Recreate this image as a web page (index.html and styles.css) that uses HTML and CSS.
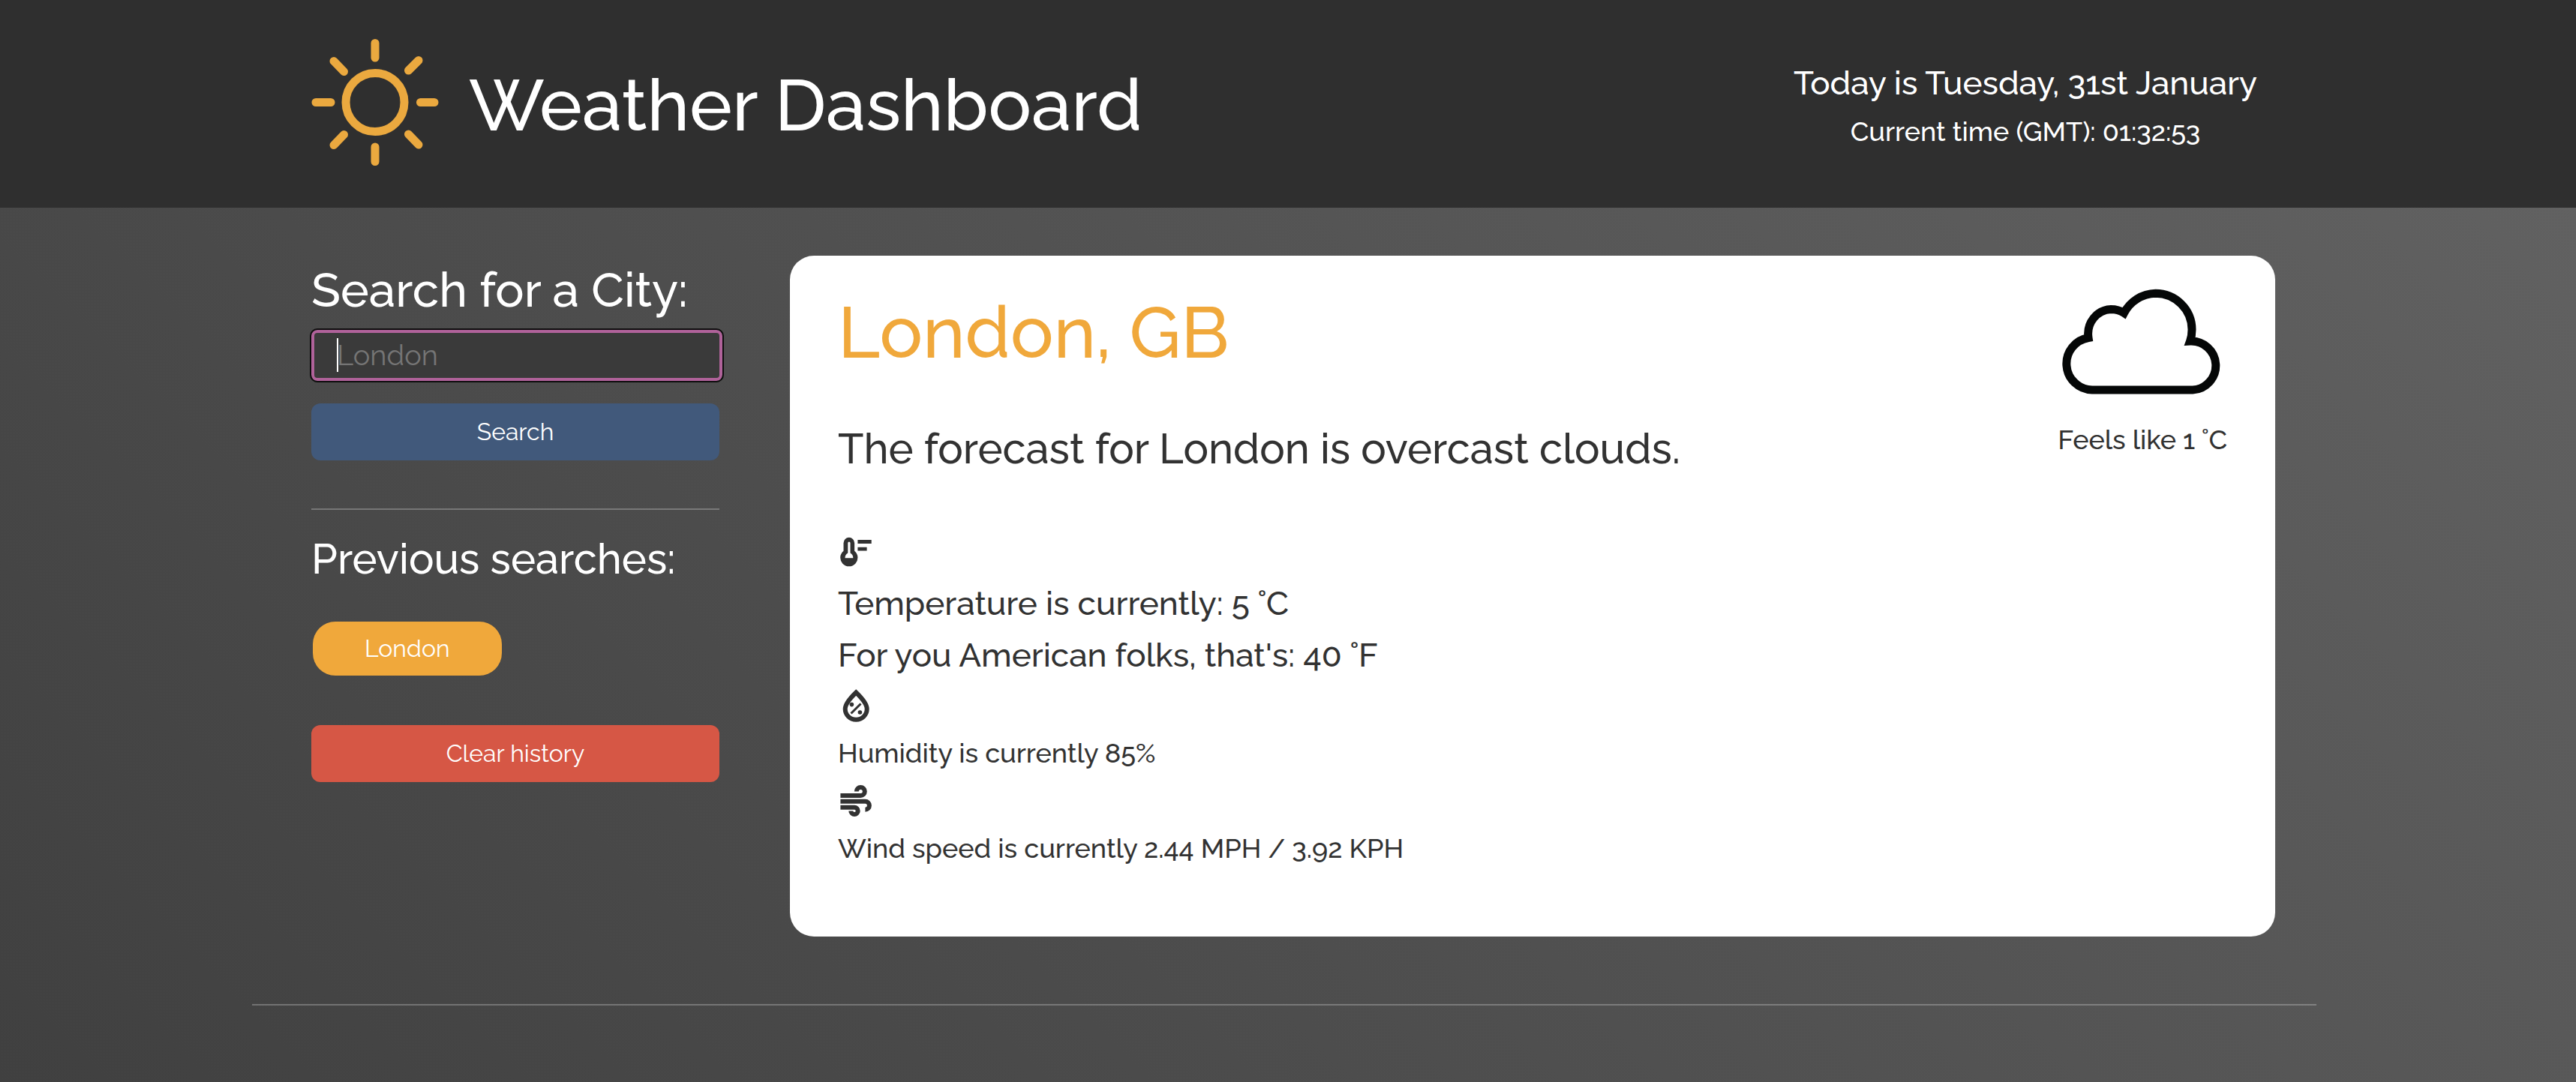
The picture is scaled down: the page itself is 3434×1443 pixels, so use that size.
FILE: index.html
```html
<!DOCTYPE html>
<html lang="en">
<head>
  <meta charset="utf-8">
  <meta name="viewport" content="width=device-width, initial-scale=1">
  <title>Weather Dashboard</title>
  <link rel="stylesheet" href="styles.css">
</head>
<body>
  <header class="site-header">
    <div class="brand">
      <svg class="sun" viewBox="0 0 170 170" aria-hidden="true">
        <circle cx="85" cy="84.5" r="39"/>
        <path d="M85 5.500V25M85 144V163.500M6 84.500H26M145.500 84.500H164M30 29.500L43.500 43.500M143 28.500L129.500 42M43.500 127.500L30 141.500M129.500 127L143 141"/>
      </svg>
      <h1 class="title">Weather Dashboard</h1>
    </div>
    <div class="clock">
      <p class="today">Today is Tuesday, 31st January</p>
      <p class="time">Current time (GMT): 01:32:53</p>
    </div>
  </header>

  <main class="dashboard">
    <aside class="sidebar">
      <form class="search-form">
        <label class="search-label" for="city">Search for a City:</label>
        <div class="field">
          <input class="city-input" id="city" type="text" placeholder="London">
          <span class="caret"></span>
        </div>
        <button class="button button-search" type="button">Search</button>
      </form>
      <hr class="rule">
      <h2 class="history-title">Previous searches:</h2>
      <button class="chip" type="button">London</button>
      <button class="button button-clear" type="button">Clear history</button>
    </aside>

    <section class="card">
      <div class="report">
        <h2 class="city">London, GB</h2>
        <p class="summary">The forecast for London is overcast clouds.</p>
        <svg class="icon" viewBox="1 0 50 50" aria-hidden="true">
          <path fill-rule="evenodd" d="M8.500 13.200a7.300 7.500 0 0 1 14.600 0V23.700A11.600 11.600 0 1 1 8.500 23.700ZM14.300 13a1.600 1.600 0 0 1 3.200 0V26.500Q21.300 28.500 21.300 33.300H10.500Q10.500 28.500 14.300 26.500ZM27.400 9H45.700V14H27.400ZM27.400 18.700H39.600V23.500H27.400Z"/>
        </svg>
        <p class="reading">Temperature is currently: 5 ˚C</p>
        <p class="reading">For you American folks, that's: 40 ˚F</p>
        <svg class="icon" viewBox="1 0 50 50" aria-hidden="true">
          <path class="line" d="M25.200 7.500Q10.700 21.500 10.700 29.500a14.500 14.200 0 0 0 29 0Q39.700 21.500 25.200 7.500Z"/>
          <path class="line thin" d="M18.500 35.500L31.500 22.500"/>
          <circle cx="19.400" cy="23.600" r="2.800"/>
          <circle cx="30.400" cy="34" r="2.800"/>
        </svg>
        <p class="detail">Humidity is currently 85%</p>
        <svg class="icon" viewBox="1 0 50 50" aria-hidden="true">
          <path class="line" d="M4.400 17.900H31.300a5.500 5.500 0 1 0-5.500-5.500M4.400 25.800H37.400a5.500 5.500 0 0 1 0 11M4.400 33.700H23a4.700 4.700 0 1 1-4.700 4.700"/>
        </svg>
        <p class="detail">Wind speed is currently 2.44 MPH / 3.92 KPH</p>
      </div>
      <div class="feels">
        <svg class="cloud" viewBox="0 0 216 142" aria-hidden="true">
          <path d="M41 135A35 35 0 0 1 36 65.500A31.500 33 0 0 1 66 27.500Q76 27.500 83.500 32.500A48.500 48.500 0 0 1 125.500 6.200A48.500 48.500 0 0 1 174 54.500Q174 63 171.500 70A32.500 32.500 0 0 1 175 135Z"/>
        </svg>
        <p class="detail">Feels like 1 ˚C</p>
      </div>
    </section>
  </main>

  <footer class="site-footer">
    <hr class="rule">
  </footer>
</body>
</html>
```
FILE: styles.css
```css
* {
  box-sizing: border-box;
}

body {
  margin: 0;
  min-height: 100vh;
  background: linear-gradient(45deg, #404040, #636363);
  color: #ffffff;
  font-family: Raleway, Lato, sans-serif;
  font-weight: 500;
}

h1,
h2,
p {
  margin: 0;
  font-weight: 500;
}

.site-header {
  display: flex;
  align-items: center;
  justify-content: space-between;
  padding: 52px 425px 48px 415px;
  background: #2f2f2f;
}

.brand {
  display: flex;
  align-items: center;
  gap: 40px;
}

.sun {
  width: 170px;
  height: 170px;
  margin-bottom: 7px;
  fill: none;
  stroke: #eba93f;
  stroke-width: 11;
  stroke-linecap: round;
}

.title {
  padding-bottom: 2px;
  font-size: 96px;
  line-height: 114px;
}

.clock {
  display: grid;
  gap: 4px;
  padding-bottom: 2px;
  text-align: center;
}

.today,
.reading {
  font-size: 44px;
  line-height: 66px;
}

.time,
.detail {
  font-size: 36px;
  line-height: 54px;
}

.dashboard {
  display: grid;
  grid-template-columns: 544fr 1980fr;
  gap: 94px;
  padding: 64px 401px 0 415px;
}

.sidebar {
  padding-top: 8px;
}

.search-label {
  display: block;
  margin-bottom: 15px;
  font-size: 64px;
  line-height: 76px;
}

.field {
  position: relative;
  margin: 0 -4px 30px 0;
}

.city-input {
  display: block;
  width: 100%;
  height: 68px;
  padding: 0 30px 2px;
  border: 4px solid #b0629a;
  border-radius: 8px;
  outline: 2px solid #0e0e0e;
  background: #3a3a3a;
  color: #ffffff;
  font-family: inherit;
  font-size: 38px;
}

.city-input::placeholder {
  color: #757575;
}

.caret {
  position: absolute;
  top: 11px;
  left: 34px;
  width: 2px;
  height: 45px;
  background: #ffffff;
}

.button,
.chip {
  display: block;
  border: 0;
  color: #ffffff;
  font-family: inherit;
  font-size: 32px;
  line-height: 48px;
}

.button {
  width: 100%;
  padding: 14px;
  border-radius: 12px;
}

.button-search {
  background: #41597b;
}

.button-clear {
  background: #d65745;
}

.rule {
  height: 2px;
  margin: 0;
  border: 0;
  background: rgba(255, 255, 255, 0.25);
}

.sidebar .rule {
  margin: 64px 0 32px;
}

.history-title {
  font-size: 56px;
  line-height: 66px;
}

.chip {
  margin: 51px 2px 66px;
  padding: 12px 69px;
  border-radius: 30px;
  background: #f0a83b;
}

.card {
  display: flex;
  justify-content: space-between;
  padding: 44px 64px 91px;
  border-radius: 32px;
  background: #ffffff;
  color: #323232;
}

.city {
  color: #f0a83b;
  font-size: 96px;
  line-height: 116px;
}

.summary {
  margin: 64px 0 80px;
  font-size: 56px;
  line-height: 66px;
}

.icon {
  display: block;
  width: 50px;
  height: 50px;
  margin-bottom: 11px;
  fill: #323232;
}

.icon .line {
  fill: none;
  stroke: #323232;
  stroke-width: 6;
}

.icon .thin {
  stroke-width: 3;
}

.reading + .reading {
  margin-top: 3px;
}

.reading + .icon {
  margin-top: 9px;
}

.detail + .icon {
  margin-top: 12px;
}

.feels {
  display: flex;
  flex-direction: column;
  align-items: center;
  gap: 32px;
}

.cloud {
  width: 216px;
  height: 142px;
  overflow: visible;
  fill: none;
  stroke: #050707;
  stroke-width: 11;
}

.site-footer {
  padding: 90px 346px 64px 336px;
}
```
